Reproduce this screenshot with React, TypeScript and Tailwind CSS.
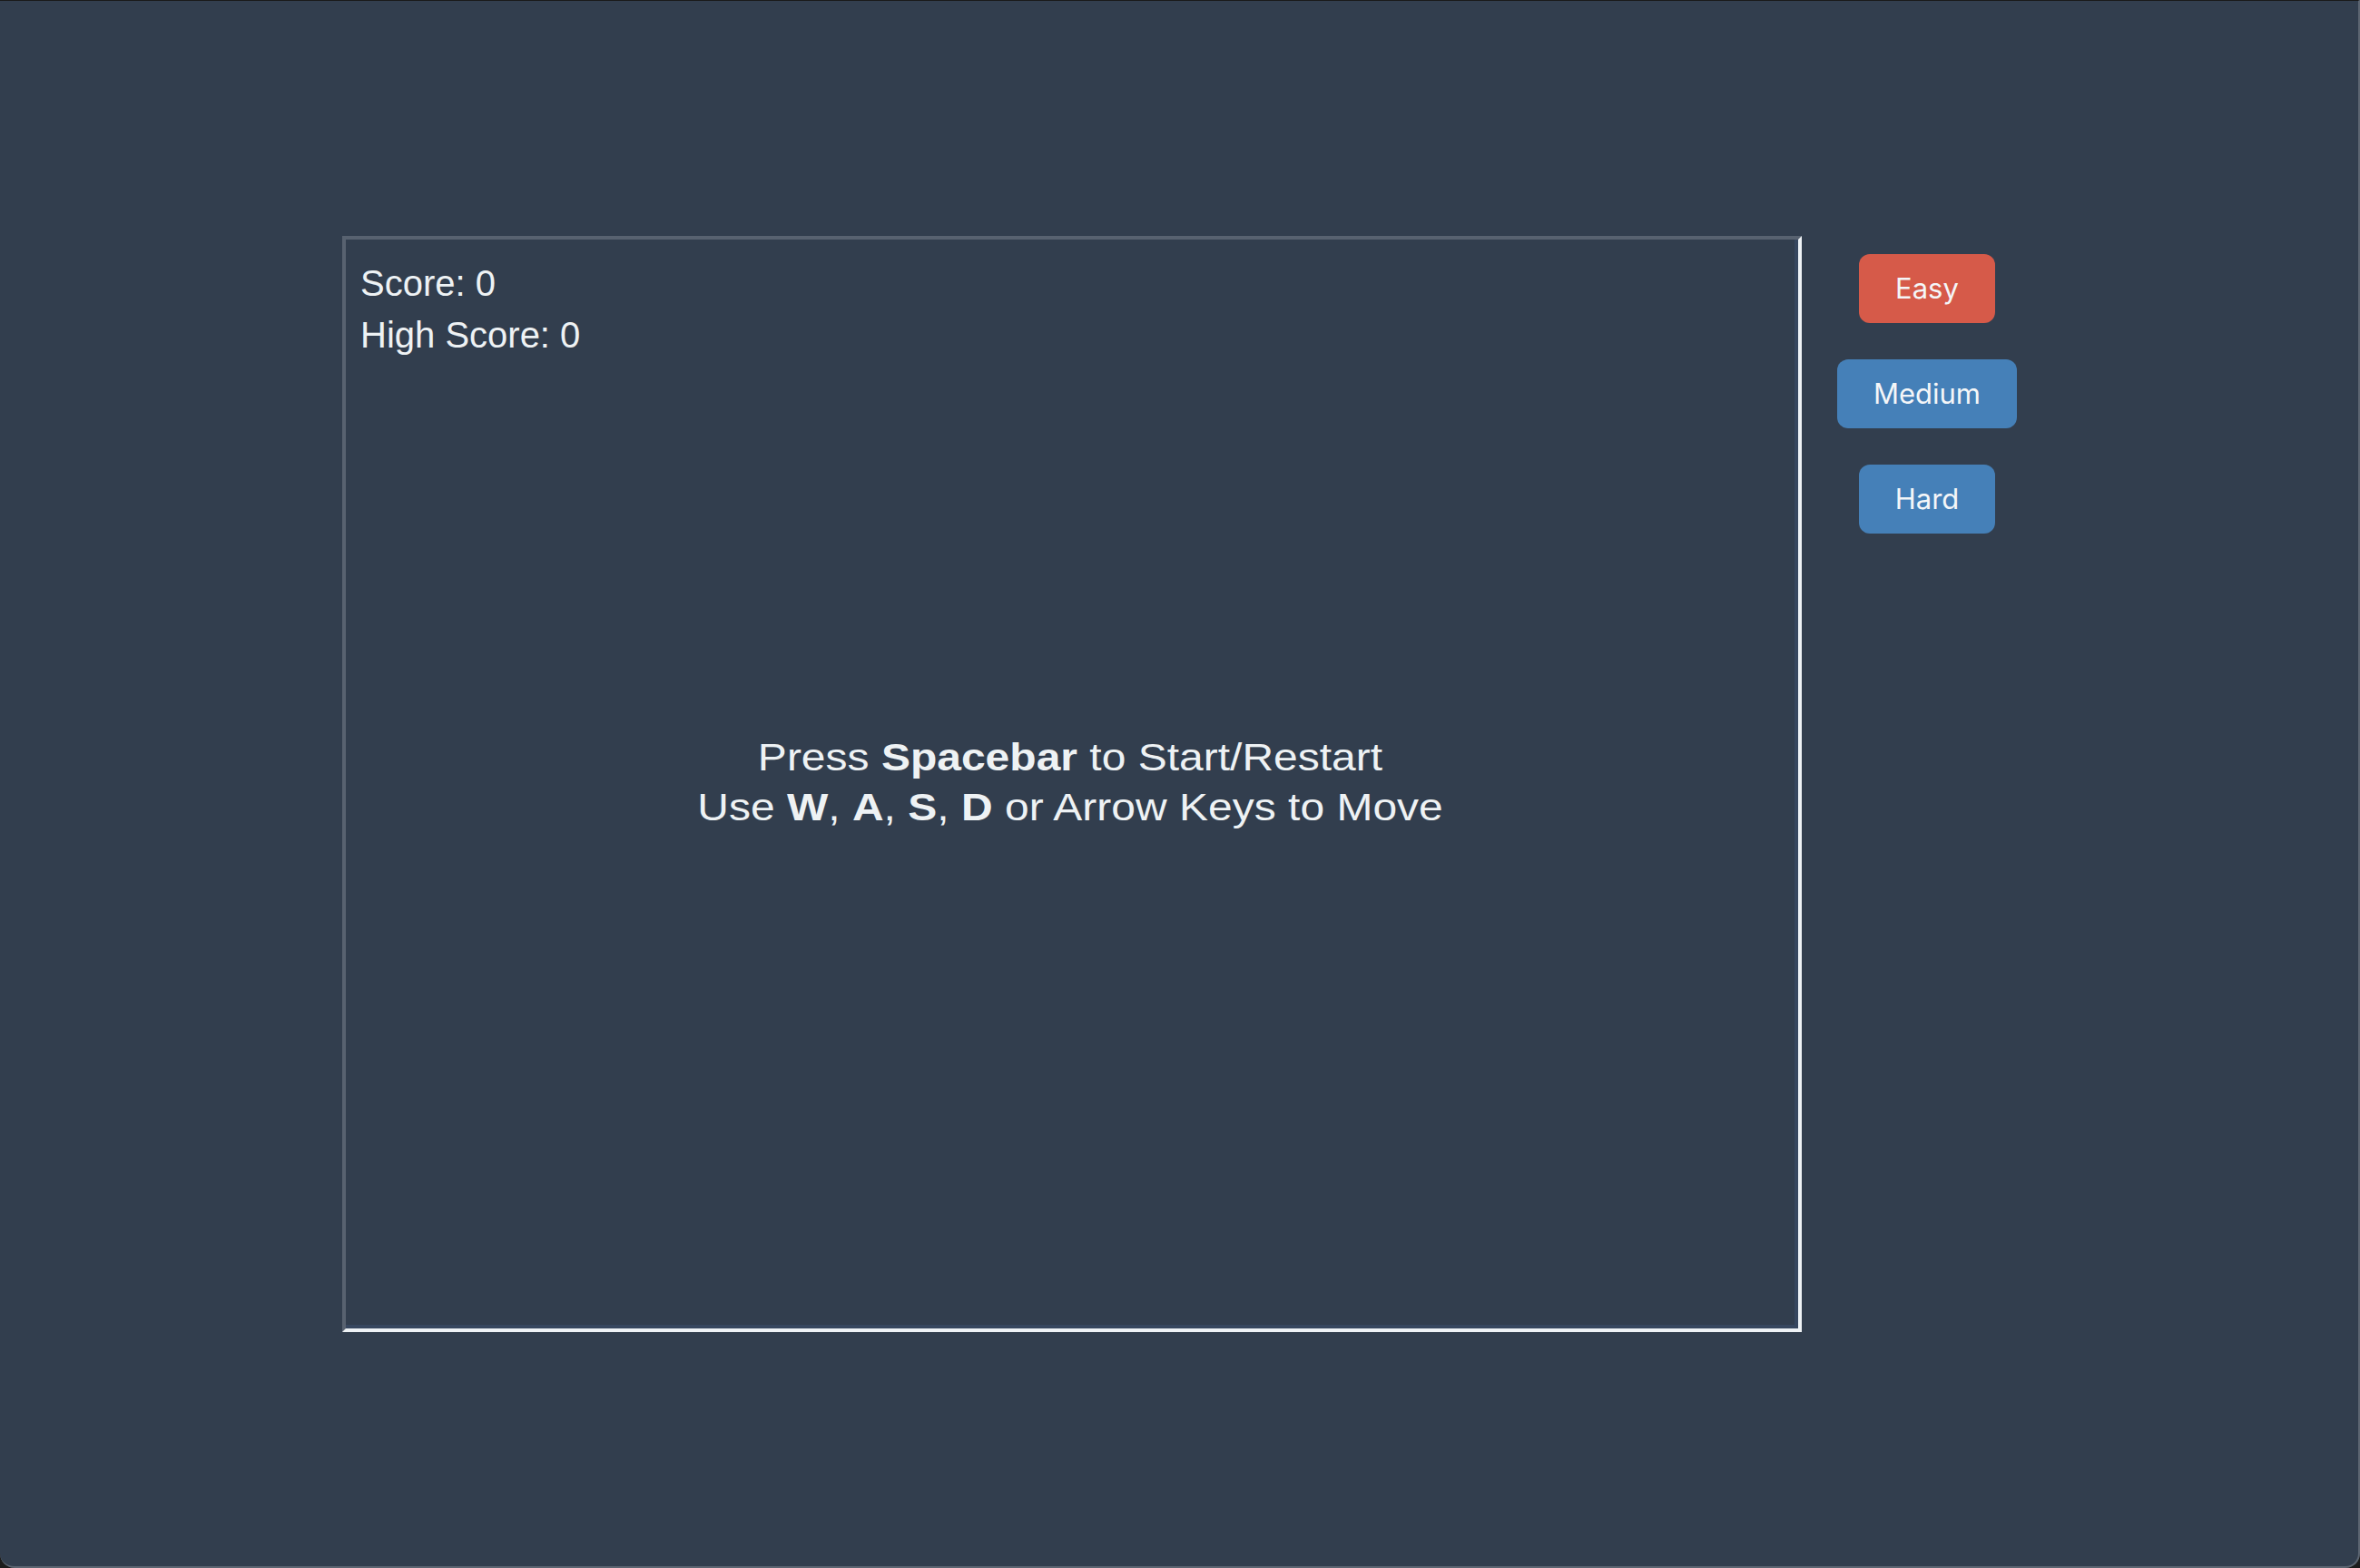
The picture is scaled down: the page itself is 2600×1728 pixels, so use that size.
import React, { useState } from 'react';

type Level = 'easy' | 'medium' | 'hard';

const levels: { id: Level; label: string }[] = [
  { id: 'easy', label: 'Easy' },
  { id: 'medium', label: 'Medium' },
  { id: 'hard', label: 'Hard' },
];

export default function App() {
  const [level, setLevel] = useState<Level>('easy');
  const [score] = useState(0);
  const [highScore] = useState(0);

  return (
    <div className="h-[1728px] w-[2600px] bg-[#1c1c1c]">
      <div className="flex h-full w-full items-center justify-center gap-10 rounded-b-[16px] border-t border-r-2 border-b-2 border-t-[#1a1a1a] border-r-[#5c6571] border-b-[#5c6571] bg-[#323e4e]">
        {/* Game board */}
        <div className="border-4 border-t-[#586270] border-l-[#586270] border-r-[#eef2f5] border-b-[#eef2f5]">
          <div
            className="grid h-[1200px] w-[1600px] border-r-4 border-b-4 border-[#37475f] text-[#eef2f4]"
            style={{ fontFamily: '"Liberation Sans", Arial, sans-serif' }}
          >
            <div className="col-start-1 row-start-1 pt-5 pl-4 text-[40px] leading-[57px]">
              <div>Score: {score}</div>
              <div>High Score: {highScore}</div>
            </div>
            <div className="col-start-1 row-start-1 flex items-center justify-center">
              <div className="scale-y-[0.9] text-center text-[48px] leading-[62px]">
                <div>
                  Press <b>Spacebar</b> to Start/Restart
                </div>
                <div>
                  Use <b>W</b>, <b>A</b>, <b>S</b>, <b>D</b> or Arrow Keys to Move
                </div>
              </div>
            </div>
          </div>
        </div>

        {/* Difficulty */}
        <div className="flex h-[1208px] w-[196px] flex-col items-center gap-10 pt-5">
          {levels.map((l) => (
            <button
              key={l.id}
              onClick={() => setLevel(l.id)}
              className={`rounded-xl px-10 py-5 text-[31px] leading-[36px] text-[#f4f6f8] ${
                level === l.id ? 'bg-[#d65a49]' : 'bg-[#4580b8]'
              }`}
              style={{ fontFamily: 'Inter, "Noto Sans", sans-serif' }}
            >
              {l.label}
            </button>
          ))}
        </div>
      </div>
    </div>
  );
}
